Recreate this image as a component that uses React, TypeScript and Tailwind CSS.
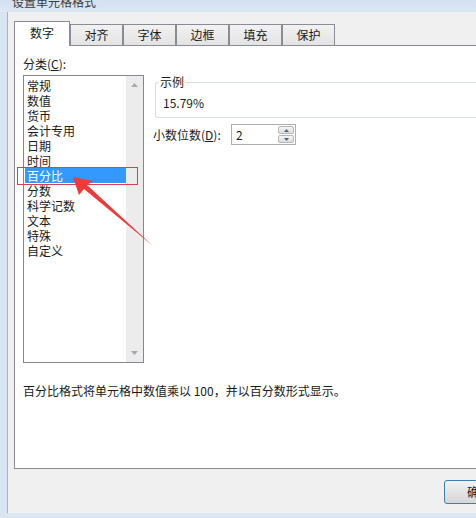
import React from 'react';

const font = { fontFamily: '"Noto Sans CJK SC", "Noto Sans", sans-serif' };

const categories = ['常规', '数值', '货币', '会计专用', '日期', '时间', '百分比', '分数', '科学记数', '文本', '特殊', '自定义'];
const tabs = ['对齐', '字体', '边框', '填充', '保护'];

export default function App() {
  return (
    <div className="relative flex h-[518px] w-[476px] flex-col overflow-hidden bg-[#d9e5f3] text-[12px] text-[#1a1a1a]" style={font}>
      {/* title bar */}
      <div className="h-[12px] shrink-0 bg-gradient-to-b from-[#d4e1f1] to-[#dde8f5] pl-[12px]">
        <div className="-mt-[6px] text-[12px] leading-[16px] text-[#3a3a3a]">设置单元格格式</div>
      </div>

      {/* dialog body */}
      <div className="ml-[7px] flex flex-1 flex-col border-l border-[#a9b4c2] bg-[#f0f0f0] pl-[6px] pt-[9px]">
        {/* tabs */}
        <div className="flex h-[24px] shrink-0 items-end gap-[1px]">
          <div className="relative z-10 -mb-px flex h-[25px] w-[56px] items-center justify-center border border-b-0 border-[#898c95] bg-white pb-[2px]">
            数字
          </div>
          {tabs.map((t) => (
            <div
              key={t}
              className="-ml-px flex h-[21px] w-[53px] items-center justify-center border border-b-0 border-[#898c95] bg-gradient-to-b from-[#f2f2f2] to-[#e3e3e3] first:ml-0"
            >
              {t}
            </div>
          ))}
        </div>

        {/* panel */}
        <div className="relative h-[424px] shrink-0 border border-r-0 border-[#898c95] bg-white">
          <div className="flex">
            {/* left column */}
            <div className="flex flex-col pl-[8px] pt-[10px]">
              <div className="leading-[16px]">
                分类(<span className="underline">C</span>):
              </div>
              <div className="mt-[3px] flex h-[288px] w-[121px] border border-[#828790] bg-white">
                <div className="flex-1 pl-[1px] pt-[2px]">
                  {categories.map((c) => (
                    <div
                      key={c}
                      className={
                        'h-[15px] pl-[2px] leading-[15px] ' +
                        (c === '百分比' ? 'bg-[#3399ff] text-white' : '')
                      }
                    >
                      {c}
                    </div>
                  ))}
                </div>
                <div className="flex w-[17px] flex-col items-center justify-between bg-[#ececec] py-[7px]">
                  <svg width="7" height="4" viewBox="0 0 7 4">
                    <path d="M0 4 L3.5 0 L7 4 Z" fill="#a8a8a8" />
                  </svg>
                  <svg width="7" height="4" viewBox="0 0 7 4">
                    <path d="M0 0 L3.5 4 L7 0 Z" fill="#a8a8a8" />
                  </svg>
                </div>
              </div>
            </div>

            {/* right column */}
            <div className="flex flex-1 flex-col pl-[9px] pt-[36px]">
              <div className="relative ml-[2px] h-[36px] rounded-l-[3px] border border-r-0 border-[#d5dfe5]">
                <div className="absolute -top-[9px] left-[3px] bg-white px-[1px] leading-[16px]">示例</div>
                <div className="pl-[7px] pt-[12px] leading-[16px]">15.79%</div>
              </div>
              <div className="mt-[6px] flex items-center">
                <div className="w-[78px] leading-[16px]">
                  小数位数(<span className="underline">D</span>):
                </div>
                <div className="flex h-[21px] w-[65px] items-center justify-between border border-[#abadb3] bg-white pl-[4px] pr-[1px]">
                  <span className="leading-[16px]">2</span>
                  <div className="flex h-[17px] w-[16px] flex-col gap-[1px]">
                    <div className="flex flex-1 items-center justify-center rounded-[2px] border border-[#b5b5b5] bg-gradient-to-b from-[#f4f4f4] to-[#dedede]">
                      <svg width="5" height="3" viewBox="0 0 5 3">
                        <path d="M0 3 L2.5 0 L5 3 Z" fill="#4d6185" />
                      </svg>
                    </div>
                    <div className="flex flex-1 items-center justify-center rounded-[2px] border border-[#b5b5b5] bg-gradient-to-b from-[#f4f4f4] to-[#dedede]">
                      <svg width="5" height="3" viewBox="0 0 5 3">
                        <path d="M0 0 L2.5 3 L5 0 Z" fill="#4d6185" />
                      </svg>
                    </div>
                  </div>
                </div>
              </div>
            </div>
          </div>

          <div className="pl-[8px] pt-[20px] leading-[16px]">百分比格式将单元格中数值乘以 100，并以百分数形式显示。</div>
        </div>

        {/* footer */}
        <div className="flex flex-1 justify-end pt-[11px]">
          <div className="-mr-[38px] flex h-[24px] w-[70px] items-center justify-center rounded-[3px] border border-[#3c7fb1] bg-gradient-to-b from-[#f2f2f2] to-[#d6d6d6]">
            确定
          </div>
        </div>
      </div>
      <div className="h-[5px] shrink-0 bg-[#dbe6f3]" />

      {/* annotation overlay */}
      <div className="pointer-events-none absolute left-[17px] top-[167px] h-[18px] w-[121px] border border-[#d9404a]" />
      <svg className="pointer-events-none absolute left-0 top-0" width="476" height="518" viewBox="0 0 476 518">
        <polygon points="73,177 93,181 87,185 153,246 84,189 79,195" fill="#ee3a3a" />
      </svg>
    </div>
  );
}
